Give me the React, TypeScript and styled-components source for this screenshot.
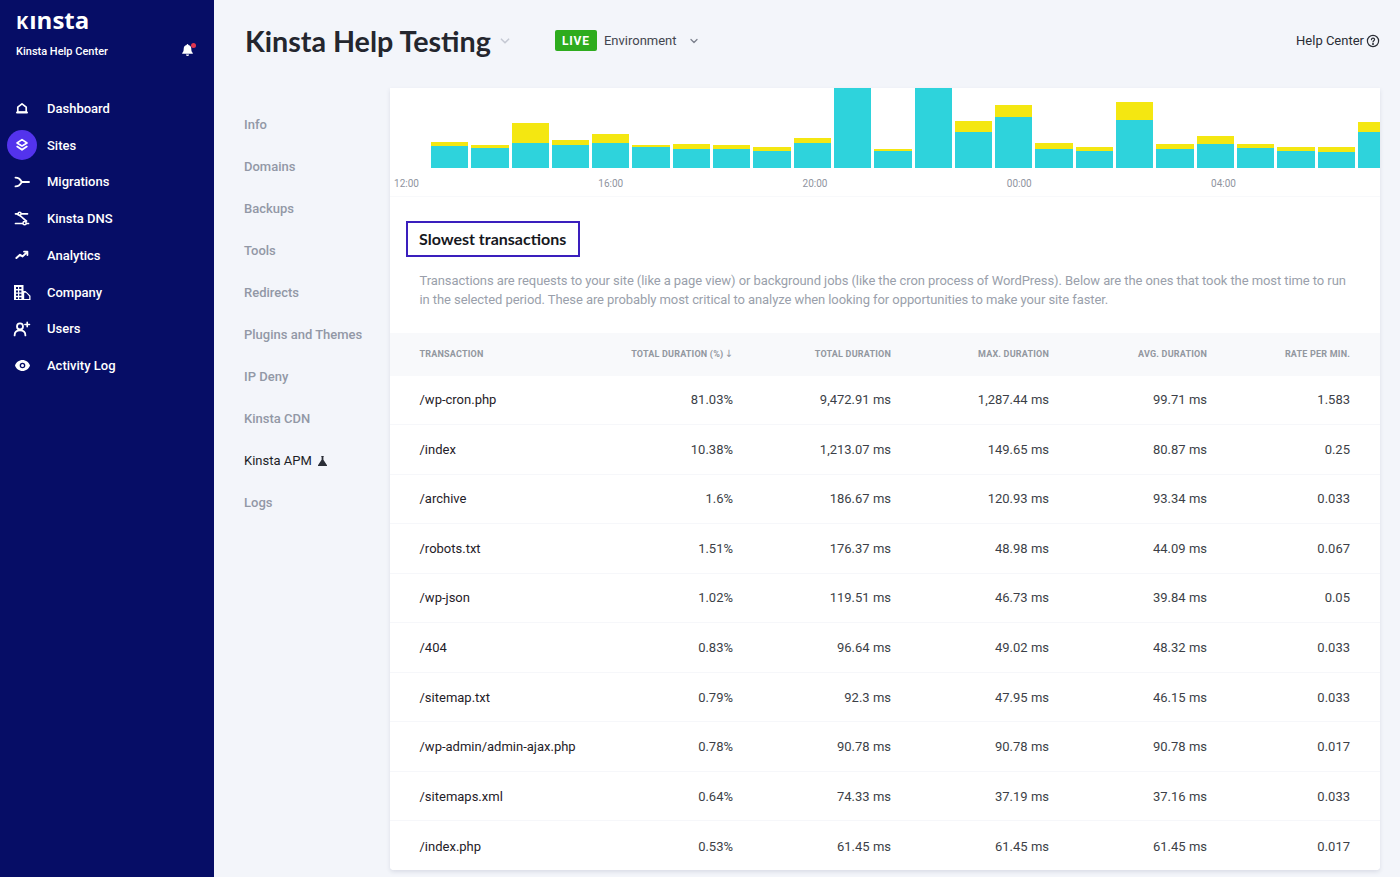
import React from "react";
import styled, { createGlobalStyle } from "styled-components";

const Global = createGlobalStyle`
  html, body { margin: 0; padding: 0; height: 100%; background: #f3f5fa; }
  body { font-family: Roboto, "Liberation Sans", sans-serif; -webkit-font-smoothing: antialiased; }
  * { box-sizing: border-box; }
`;

const Page = styled.div`
  display: flex;
  height: 877px;
  overflow: hidden;
  background: #f3f5fa;
`;

const Sidebar = styled.aside`
  flex: 0 0 214px;
  background: #060d66;
  color: #fff;
  padding: 5px 0 0 0;
`;

const Logo = styled.div`
  font-family: "Open Sans", sans-serif;
  font-weight: 700;
  font-size: 24px;
  line-height: 29px;
  margin-left: 16px;
  white-space: nowrap;
`;

const LogoCap = styled.span`
  font-size: 18.5px;
  margin-right: 1px;
`;

const SiteRow = styled.div`
  display: flex;
  align-items: center;
  justify-content: space-between;
  padding: 0 21px 0 16px;
  margin-top: 6.5px;
  height: 18px;
  font-size: 11px;
  font-weight: 500;
`;

const BellWrap = styled.span`
  position: relative;
  display: flex;
  top: -2px;
`;

const BellDot = styled.span`
  position: absolute;
  top: -1px;
  right: -3px;
  width: 5px;
  height: 5px;
  border-radius: 50%;
  background: #e0354f;
`;

const MainNav = styled.nav`
  display: flex;
  flex-direction: column;
  margin-top: 29.5px;
`;

const MainItem = styled.div`
  display: flex;
  align-items: center;
  height: 36.75px;
  font-size: 13px;
  font-weight: 500;
  gap: 10px;
  padding-left: 7px;
`;

const IconBubble = styled.span<{ $active?: boolean }>`
  width: 30px;
  height: 30px;
  border-radius: 50%;
  display: flex;
  align-items: center;
  justify-content: center;
  background: ${(p) => (p.$active ? "#5333ed" : "transparent")};
`;

const Main = styled.div`
  flex: 1;
  display: flex;
  flex-direction: column;
  min-width: 0;
`;

const Header = styled.header`
  flex: 0 0 88px;
  height: 88px;
  display: flex;
  align-items: center;
  padding: 0 20px 7px 31px;
`;

const Title = styled.h1`
  margin: 0;
  font-family: Lato, sans-serif;
  font-weight: 700;
  font-size: 28.7px;
  color: #24262e;
`;

const TitleChevron = styled.span`
  display: flex;
  margin-left: 8px;
  color: #c5c9d3;
`;

const LiveBadge = styled.span`
  margin-left: 44px;
  width: 42px;
  height: 21px;
  border-radius: 2px;
  background: #2eac1e;
  color: #fff;
  font-size: 12px;
  font-weight: 700;
  letter-spacing: 0.8px;
  display: flex;
  align-items: center;
  justify-content: center;
`;

const EnvLabel = styled.span`
  margin-left: 7px;
  font-size: 13px;
  color: #43464f;
`;

const EnvChevron = styled.span`
  display: flex;
  margin-left: 12px;
  color: #7c818d;
`;

const HelpLink = styled.span`
  margin-left: auto;
  display: flex;
  align-items: center;
  gap: 2px;
  font-size: 13px;
  color: #2a2d35;
`;

const Body = styled.div`
  flex: 1;
  display: flex;
  min-height: 0;
`;

const SubNav = styled.nav`
  flex: 0 0 176px;
  display: flex;
  flex-direction: column;
  padding: 15px 0 0 30px;
`;

const SubItem = styled.div<{ $active?: boolean }>`
  height: 42.1px;
  display: flex;
  align-items: center;
  gap: 6px;
  font-size: 13px;
  font-weight: ${(p) => (p.$active ? 400 : 500)};
  color: ${(p) => (p.$active ? "#1c1e26" : "#9298a6")};
`;

const Card = styled.section`
  flex: 0 0 990px;
  height: 781.5px;
  background: #fff;
  border-radius: 0 0 4px 4px;
  box-shadow: 0 2px 4px rgba(40, 50, 90, 0.12);
  overflow: hidden;
`;

const ChartArea = styled.div`
  height: 109px;
  border-bottom: 1px solid #f8f9fb;
`;

const Plot = styled.div`
  height: 80px;
  display: flex;
  align-items: flex-end;
  gap: 3px;
  padding-left: 41px;
  overflow: hidden;
`;

const BarStack = styled.div`
  flex: 0 0 37.3px;
  display: flex;
  flex-direction: column;
`;

const BarYellow = styled.div`
  background: #f4e711;
`;

const BarTeal = styled.div`
  background: #2ed3dc;
`;

const Axis = styled.div`
  display: flex;
  gap: 172.25px;
  padding: 10px 0 0 0.5px;
`;

const AxisLabel = styled.span`
  flex: 0 0 32px;
  text-align: center;
  font-size: 10px;
  line-height: 12px;
  color: #8f94a0;
`;

const Intro = styled.div`
  padding: 24px 34px 0 16px;
  height: 136px;
`;

const SectionTitle = styled.h2`
  display: inline-block;
  margin: 0;
  height: 36px;
  padding: 0 12px 0 11px;
  border: 2px solid #3a1fbd;
  font-family: Lato, sans-serif;
  font-weight: 700;
  font-size: 16px;
  line-height: 31px;
  color: #16171d;
`;

const Description = styled.p`
  margin: 14px 0 0 13.5px;
  font-size: 13px;
  line-height: 19px;
  letter-spacing: -0.08px;
  color: #9a9fab;
`;

const Row = styled.div<{ $head?: boolean }>`
  display: grid;
  grid-template-columns: 155.5px 158px 158px 158px 158px 143px;
  align-items: center;
  padding: 0 29px 0 29.5px;
  height: ${(p) => (p.$head ? "42.5px" : "49.55px")};
  background: ${(p) => (p.$head ? "#f8f9fb" : "#fff")};
  border-bottom: ${(p) => (p.$head ? "none" : "1px solid #f6f7fa")};
  &:last-child { border-bottom: none; }
`;

const HeadCell = styled.div<{ $left?: boolean }>`
  text-align: ${(p) => (p.$left ? "left" : "right")};
  font-size: 9px;
  line-height: 12px;
  font-weight: 700;
  letter-spacing: 0.2px;
  color: #92979f;
  white-space: nowrap;
`;

const SortArrow = styled.span`
  font-family: "DejaVu Sans", sans-serif;
  font-size: 10px;
  line-height: 1;
  font-weight: 400;
  margin-left: 1px;
`;

const Cell = styled.div<{ $left?: boolean }>`
  text-align: ${(p) => (p.$left ? "left" : "right")};
  font-size: 13px;
  color: ${(p) => (p.$left ? "#1f2128" : "#3c3f47")};
  white-space: nowrap;
`;

const Svg = ({ children, size = 16, vb = "0 0 16 16", color = "#fff" }: { children: React.ReactNode; size?: number; vb?: string; color?: string }) => (
  <svg width={size} height={size} viewBox={vb} fill="none" stroke={color} strokeWidth={2} strokeLinecap="round" strokeLinejoin="round">
    {children}
  </svg>
);

const HomeIcon = () => (
  <Svg>
    <path d="M3.8 12.2V7.2L8 3.8l4.2 3.4v5z" strokeWidth={1.7} />
    <path d="M3 12.4h10" strokeWidth={2} />
  </Svg>
);
const LayersIcon = () => (
  <Svg>
    <path d="M8 2.6 13 6 8 9 3 6z" strokeWidth={1.6} />
    <path d="M3.2 9.6 8 12.8l4.8-3.2" strokeWidth={1.8} />
  </Svg>
);
const MigrateIcon = () => (
  <Svg>
    <path d="M1.5 3.6c3 0 4 1 6.4 4.4-2.4 3.4-3.4 4.4-6.4 4.4M8 8h7" strokeWidth={1.9} />
  </Svg>
);
const DnsIcon = () => (
  <Svg>
    <path d="M1.500 2.800h2.500M7.500 2.800h6M3.500 3.500c3 .6 7 5.500 9 6.500M1.500 12.500h7M12.500 12.500h2" strokeWidth={1.7} />
    <circle cx="5.600" cy="2.800" r="1.500" strokeWidth={1.5} />
    <circle cx="10.600" cy="12.200" r="1.600" strokeWidth={1.5} />
  </Svg>
);
const TrendIcon = () => (
  <Svg>
    <path d="M2.400 11 6 7.800l2.600 1.600 4.400-4.200" strokeWidth={2} />
    <path d="M10 4.600h3.400V8" strokeWidth={1.8} />
  </Svg>
);
const BuildingIcon = () => (
  <svg width="17" height="15" viewBox="0 0 17 15" fill="#fff">
    <path fillRule="evenodd" d="M0 0h9.500v6h2l5 4.700V15H0zM2 2v2h2V2zm3.200 0v2h2.200V2zM2 5.400v2h2v-2zm3.200 0v2h2.200v-2zM2 8.800v2h2v-2zm3.200 0v2h2.200v-2zM2 12.200V14h2v-1.800zm3.200 0V14h2.200v-1.800zm5-4.400V14h5v-2.800L12 7.800z" />
  </svg>
);
const UserPlusIcon = () => (
  <Svg size={18} vb="0 0 18 18">
    <circle cx="7" cy="6.400" r="3" strokeWidth={1.8} />
    <path d="M1.600 15.400c0-3.400 2.200-5 5.400-5s5.400 1.600 5.400 5" strokeWidth={1.8} />
    <path d="M14.200 2.200v4.600M11.900 4.500h4.600" strokeWidth={1.6} />
  </Svg>
);
const EyeIcon = () => (
  <svg width="15" height="11" viewBox="0 0 15 11">
    <path fill="#fff" fillRule="evenodd" d="M7.500 0C11 0 13.800 2.300 15 5.500 13.800 8.700 11 11 7.500 11S1.200 8.700 0 5.500C1.200 2.300 4 0 7.500 0zm0 2.700a2.800 2.800 0 1 0 0 5.600 2.800 2.800 0 0 0 0-5.600z" />
    <circle cx="7.500" cy="5.500" r="1.500" fill="#fff" />
  </svg>
);
const BellIcon = () => (
  <svg width="11" height="12" viewBox="0 0 11 12" fill="#fff">
    <path d="M5.500 0c.5 0 .9.400.9.900 1.900.4 2.900 1.900 2.900 3.800 0 2.300.6 3.300 1.500 4.300v.7H.2V9c.9-1 1.500-2 1.500-4.300 0-1.900 1-3.400 2.900-3.800 0-.5.400-.9.900-.9z" />
    <path d="M4 10.500h3a1.500 1.500 0 0 1-3 0z" />
  </svg>
);
const Chevron = ({ size = 10 }: { size?: number }) => (
  <svg width={size} height={size} viewBox="0 0 10 10" fill="none" stroke="currentColor" strokeWidth={1.3} strokeLinecap="round" strokeLinejoin="round">
    <path d="M2 3.500 5 6.500l3-3" />
  </svg>
);
const HelpIcon = () => (
  <svg width="14" height="14" viewBox="0 0 14 14" fill="none" stroke="#2a2d35" strokeWidth={1.2} strokeLinecap="round">
    <circle cx="7" cy="7" r="5.600" />
    <path d="M5.400 5.600C5.500 4.700 6.200 4.200 7 4.200c.9 0 1.600.6 1.600 1.400 0 1.100-1.600 1.200-1.600 2.400" />
    <circle cx="7" cy="9.900" r=".4" fill="#2a2d35" />
  </svg>
);
const FlaskIcon = () => (
  <svg width="9" height="10" viewBox="0 0 9 10" fill="#2b2e37">
    <path d="M3.200 0h2.600v.8h-.4v2.900L9 9.200V10H0v-.8l3.600-5.500V.8h-.4z" />
  </svg>
);

const mainItems: { label: string; icon: React.ReactNode; active?: boolean }[] = [
  { label: "Dashboard", icon: <HomeIcon /> },
  { label: "Sites", icon: <LayersIcon />, active: true },
  { label: "Migrations", icon: <MigrateIcon /> },
  { label: "Kinsta DNS", icon: <DnsIcon /> },
  { label: "Analytics", icon: <TrendIcon /> },
  { label: "Company", icon: <BuildingIcon /> },
  { label: "Users", icon: <UserPlusIcon /> },
  { label: "Activity Log", icon: <EyeIcon /> },
];

const subItems = ["Info", "Domains", "Backups", "Tools", "Redirects", "Plugins and Themes", "IP Deny", "Kinsta CDN", "Kinsta APM", "Logs"];

// [top of yellow, top of teal] as y offsets from the chart's 80px plot (0 = top)
const bars: [number, number][] = [
  [53.7, 58], [57, 59.7], [35.3, 54.7], [52, 57.3], [45.7, 54.7], [57, 59.3], [56, 60.7], [57, 61.3], [58.7, 63.3], [50.3, 54.7],
  [0, 0], [60.7, 62.7], [0, 0], [33, 44.3], [17, 28.7], [54.7, 61], [59.3, 63.3], [13.7, 32], [56, 61], [47.7, 56],
  [56.3, 60.3], [58.7, 62.7], [58.7, 63.7], [34.3, 44.3],
];

const axisLabels = ["12:00", "16:00", "20:00", "00:00", "04:00"];

const headers = ["TOTAL DURATION", "MAX. DURATION", "AVG. DURATION", "RATE PER MIN."];

const rows = [
  ["/wp-cron.php", "81.03%", "9,472.91 ms", "1,287.44 ms", "99.71 ms", "1.583"],
  ["/index", "10.38%", "1,213.07 ms", "149.65 ms", "80.87 ms", "0.25"],
  ["/archive", "1.6%", "186.67 ms", "120.93 ms", "93.34 ms", "0.033"],
  ["/robots.txt", "1.51%", "176.37 ms", "48.98 ms", "44.09 ms", "0.067"],
  ["/wp-json", "1.02%", "119.51 ms", "46.73 ms", "39.84 ms", "0.05"],
  ["/404", "0.83%", "96.64 ms", "49.02 ms", "48.32 ms", "0.033"],
  ["/sitemap.txt", "0.79%", "92.3 ms", "47.95 ms", "46.15 ms", "0.033"],
  ["/wp-admin/admin-ajax.php", "0.78%", "90.78 ms", "90.78 ms", "90.78 ms", "0.017"],
  ["/sitemaps.xml", "0.64%", "74.33 ms", "37.19 ms", "37.16 ms", "0.033"],
  ["/index.php", "0.53%", "61.45 ms", "61.45 ms", "61.45 ms", "0.017"],
];

export default function App() {
  return (
    <Page>
      <Global />
      <Sidebar>
        <Logo><LogoCap>K</LogoCap>ınsta</Logo>
        <SiteRow>
          <span>Kinsta Help Center</span>
          <BellWrap>
            <BellIcon />
            <BellDot />
          </BellWrap>
        </SiteRow>
        <MainNav>
          {mainItems.map((item) => (
            <MainItem key={item.label}>
              <IconBubble $active={item.active}>{item.icon}</IconBubble>
              {item.label}
            </MainItem>
          ))}
        </MainNav>
      </Sidebar>
      <Main>
        <Header>
          <Title>Kinsta Help Testing</Title>
          <TitleChevron><Chevron size={12} /></TitleChevron>
          <LiveBadge>LIVE</LiveBadge>
          <EnvLabel>Environment</EnvLabel>
          <EnvChevron><Chevron /></EnvChevron>
          <HelpLink>Help Center <HelpIcon /></HelpLink>
        </Header>
        <Body>
          <SubNav>
            {subItems.map((s) => (
              <SubItem key={s} $active={s === "Kinsta APM"}>
                {s}
                {s === "Kinsta APM" && <FlaskIcon />}
              </SubItem>
            ))}
          </SubNav>
          <Card>
            <ChartArea>
              <Plot>
                {bars.map(([y, t], i) => (
                  <BarStack key={i}>
                    <BarYellow style={{ height: t - y }} />
                    <BarTeal style={{ height: 80 - t }} />
                  </BarStack>
                ))}
              </Plot>
              <Axis>
                {axisLabels.map((l) => <AxisLabel key={l}>{l}</AxisLabel>)}
              </Axis>
            </ChartArea>
            <Intro>
              <SectionTitle>Slowest transactions</SectionTitle>
              <Description>
                Transactions are requests to your site (like a page view) or background jobs (like the cron process of WordPress). Below are the ones that took the most time to run in the selected period. These are probably most critical to analyze when looking for opportunities to make your site faster.
              </Description>
            </Intro>
            <Row $head>
              <HeadCell $left>TRANSACTION</HeadCell>
              <HeadCell>TOTAL DURATION (%)<SortArrow>↓</SortArrow></HeadCell>
              {headers.map((h) => <HeadCell key={h}>{h}</HeadCell>)}
            </Row>
            {rows.map((r) => (
              <Row key={r[0]}>
                {r.map((c, i) => <Cell key={i} $left={i === 0}>{c}</Cell>)}
              </Row>
            ))}
          </Card>
        </Body>
      </Main>
    </Page>
  );
}
